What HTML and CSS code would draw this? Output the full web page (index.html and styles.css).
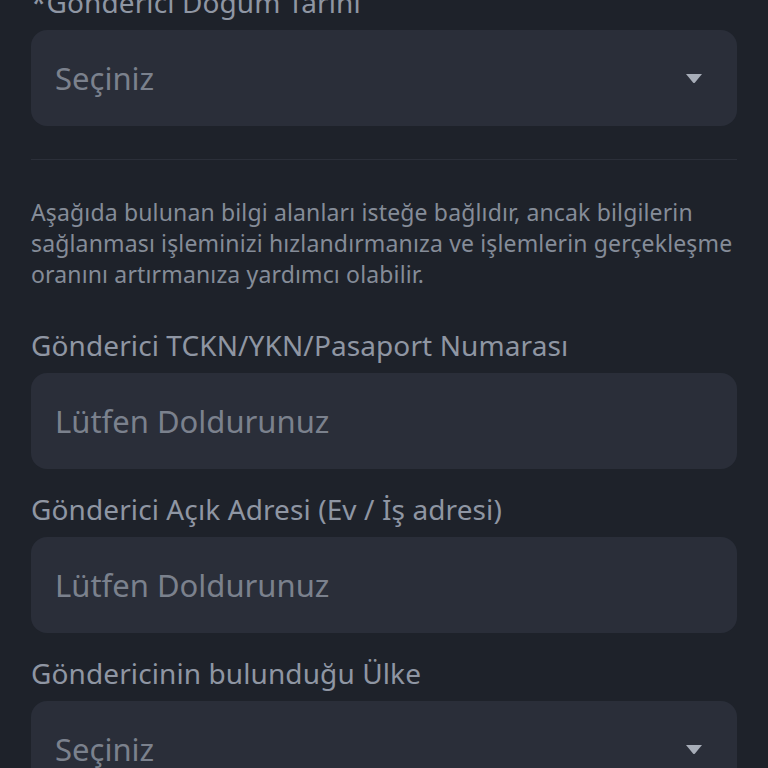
FILE: index.html
```html
<!DOCTYPE html>
<html lang="tr">
<head>
<meta charset="utf-8">
<link rel="stylesheet" href="styles.css">
</head>
<body>
<main class="form">
  <div class="field">
    <label class="label">*Gönderici Doğum Tarihi</label>
    <div class="input select">
      <span class="placeholder">Seçiniz</span>
      <svg class="caret" width="18" height="11" viewBox="0 0 18 11"><path d="M1 1h16l-7 8.5a1.3 1.3 0 0 1-2 0z" fill="#a7adb8"/></svg>
    </div>
  </div>
  <hr class="divider">
  <p class="note">Aşağıda bulunan bilgi alanları isteğe bağlıdır, ancak bilgilerin sağlanması işleminizi hızlandırmanıza ve işlemlerin gerçekleşme oranını artırmanıza yardımcı olabilir.</p>
  <div class="field">
    <label class="label">Gönderici TCKN/YKN/Pasaport Numarası</label>
    <div class="input"><span class="placeholder">Lütfen Doldurunuz</span></div>
  </div>
  <div class="field">
    <label class="label">Gönderici Açık Adresi (Ev / İş adresi)</label>
    <div class="input"><span class="placeholder">Lütfen Doldurunuz</span></div>
  </div>
  <div class="field">
    <label class="label">Göndericinin bulunduğu Ülke</label>
    <div class="input select">
      <span class="placeholder">Seçiniz</span>
      <svg class="caret" width="18" height="11" viewBox="0 0 18 11"><path d="M1 1h16l-7 8.5a1.3 1.3 0 0 1-2 0z" fill="#a7adb8"/></svg>
    </div>
  </div>
</main>
</body>
</html>
```
FILE: styles.css
```css
html, body {
  margin: 0;
  padding: 0;
  background: #1e222a;
  height: 100%;
  overflow: hidden;
}
body {
  font-family: "Noto Sans", "Open Sans", sans-serif;
  color: #8e95a2;
}
.form {
  margin-top: -16px;
  padding: 0 31px;
  display: flex;
  flex-direction: column;
}
.field {
  display: flex;
  flex-direction: column;
  margin-bottom: 22px;
}
.label {
  font-size: 28px;
  line-height: 36px;
  margin-bottom: 10px;
  color: #8f96a3;
  white-space: nowrap;
  letter-spacing: 0.1px;
}
.input {
  height: 96px;
  border-radius: 16px;
  background: #2a2e39;
  display: flex;
  align-items: center;
  padding: 0 34px 0 24px;
  box-sizing: border-box;
}
.placeholder {
  font-size: 31px;
  color: #7b818d;
  flex: 1;
}
.caret {
  display: block;
}
.divider {
  border: 0;
  height: 1px;
  background: #2b2f39;
  margin: 11px 0 37px;
}
.note {
  margin: 0 0 37px;
  font-size: 23px;
  line-height: 31px;
  letter-spacing: 0.15px;
  color: #858c98;
}
```
